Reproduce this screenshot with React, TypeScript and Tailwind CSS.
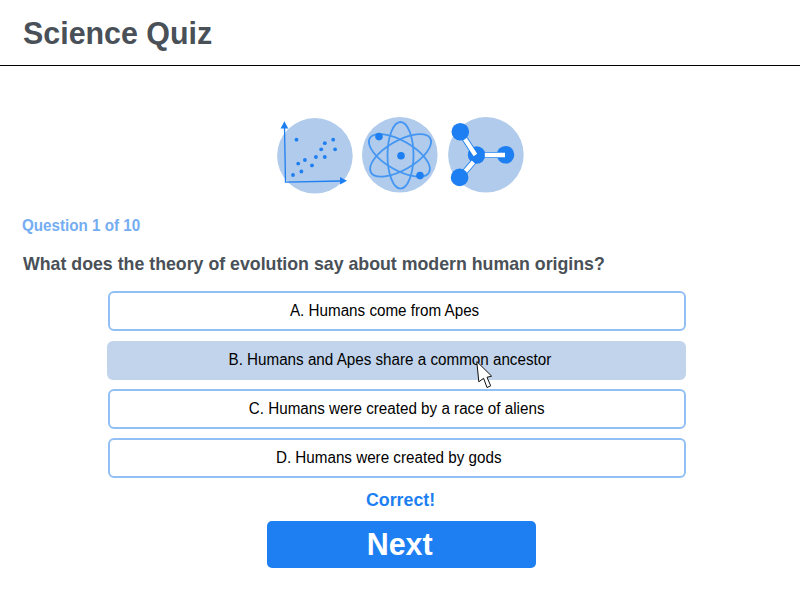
import React from "react";

const options = [
  { text: "A. Humans come from Apes", box: "mt-[16px] pr-[25px]", selected: false },
  { text: "B. Humans and Apes share a common ancestor", box: "mt-[10px] pr-[14px] pb-[1px]", selected: true },
  { text: "C. Humans were created by a race of aliens", box: "mt-[9px] pr-[1px]", selected: false },
  { text: "D. Humans were created by gods", box: "mt-[9px] pr-[17px]", selected: false },
];

const points = [
  [293, 175], [298.2, 163.6], [301.4, 171.5], [304.9, 160], [312, 165.4], [315.9, 157],
  [321.2, 149.3], [324.8, 157], [324.8, 143.2], [333.2, 139.7], [335.1, 149.3], [296.5, 139.7],
];

function ScatterIcon() {
  return (
    <svg viewBox="270 110 90 90" className="h-[90px] w-[90px]">
      <circle cx="314.9" cy="155.8" r="37.8" fill="#b0cbeb" />
      <g stroke="#1d7ff1" strokeWidth="1.3" fill="none">
        <path d="M284.5 127L285.5 182.2L341 181" />
      </g>
      <path d="M284.4 121.2L288.2 128.4H280.6ZM347 180.8L340 184.6V177Z" fill="#1d7ff1" />
      {points.map(([x, y]) => (
        <circle key={`${x}-${y}`} cx={x} cy={y} r="1.9" fill="#1d7ff1" />
      ))}
    </svg>
  );
}

function AtomIcon() {
  return (
    <svg viewBox="355 110 90 90" className="h-[90px] w-[90px]">
      <circle cx="399.8" cy="154.8" r="37.8" fill="#b0cbeb" />
      <g stroke="#4496f3" strokeWidth="1.8" fill="none">
        <ellipse cx="400.5" cy="155.3" rx="13" ry="33.3" />
        <ellipse cx="399.4" cy="155.4" rx="34.2" ry="14.6" transform="rotate(30 399.4 155.4)" />
        <ellipse cx="400.6" cy="155.4" rx="34.2" ry="14.6" transform="rotate(-30 400.6 155.4)" />
      </g>
      <g fill="#1d7ff1">
        <circle cx="401" cy="155.8" r="3.8" />
        <circle cx="379" cy="136.6" r="3.8" />
        <circle cx="420" cy="175.6" r="3.8" />
      </g>
    </svg>
  );
}

function MoleculeIcon() {
  return (
    <svg viewBox="440 110 90 90" className="h-[90px] w-[90px]">
      <circle cx="485.9" cy="154.8" r="37.8" fill="#b0cbeb" />
      <g fill="#1d7ff1">
        <circle cx="476.6" cy="155" r="8.8" />
        <circle cx="505.5" cy="154.8" r="8.8" />
      </g>
      <g fill="none" stroke="#1d7ff1" strokeWidth="6">
        <path d="M463 136L475.4 155M463 174L475 160M485 155H505.3" />
      </g>
      <g fill="none" stroke="#fff" strokeWidth="4.3">
        <path d="M463 136L475.4 155M463 174L473.4 162M484.8 155H505" />
      </g>
      <g fill="#1d7ff1">
        <circle cx="460.3" cy="131.8" r="8.8" />
        <circle cx="459.6" cy="177.4" r="8.8" />
      </g>
    </svg>
  );
}

export default function App() {
  return (
    <main className="relative flex h-[600px] w-[800px] flex-col overflow-hidden bg-white font-['Liberation_Sans',Arial,sans-serif] text-black">
      <header className="h-[66px] shrink-0 border-b border-black pt-[14px] pl-[23px]">
        <h1 className="w-fit origin-left scale-x-95 text-[32px] leading-[38px] font-bold whitespace-nowrap text-[#495057]">
          Science Quiz
        </h1>
      </header>
      <div className="mt-[44px] flex h-[90px] shrink-0 justify-start pl-[270px]">
        <ScatterIcon />
        <div className="-ml-[5px]"><AtomIcon /></div>
        <div className="-ml-[5px]"><MoleculeIcon /></div>
      </div>
      <p className="mt-[16px] ml-[22px] w-fit origin-left scale-x-95 text-base leading-5 font-bold text-[#74adf2]">
        Question 1 of 10
      </p>
      <h2 className="mt-[17px] ml-[23px] w-fit origin-left scale-x-[0.949] text-[18.72px] leading-[22px] font-bold whitespace-nowrap text-[#495057]">
        What does the theory of evolution say about modern human origins?
      </h2>
      <div className="ml-[107px] flex w-[579px] shrink-0 flex-col">
        {options.map((o) => (
          <button
            key={o.text}
            className={`flex items-center justify-center rounded-[6px] ${o.box} ${
              o.selected ? "h-[39px] bg-[#c1d4eb]" : "ml-px h-[40px] border-2 border-[#93c0f4] bg-white"
            }`}
          >
            <span className="scale-x-95 text-base leading-5 whitespace-nowrap">{o.text}</span>
          </button>
        ))}
      </div>
      <p className="mt-[10px] ml-[366px] w-fit origin-left scale-x-95 text-[18.72px] leading-6 font-bold text-[#1d7ff1]">
        Correct!
      </p>
      <button className="mt-[9px] ml-[267px] flex h-[47px] w-[269px] shrink-0 items-center justify-center rounded-[5px] bg-[#1d7ff1] pr-[3px] pb-[2px] text-white">
        <span className="scale-x-95 text-[32px] leading-9 font-bold">Next</span>
      </button>
      <svg viewBox="0 0 18 30" className="absolute top-[360px] left-[475px] h-[30px] w-[18px]">
        <path d="M1.8 1.5L3.8 21.8L8.6 18.3L12 27.5L15.7 25.8L12 17.3L16.6 16.1Z" fill="#fff" stroke="#111" strokeWidth="1" />
      </svg>
    </main>
  );
}
